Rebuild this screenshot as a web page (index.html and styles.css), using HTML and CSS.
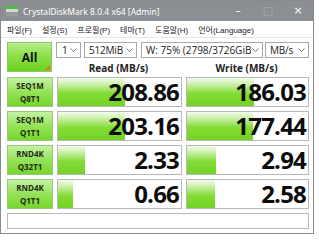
FILE: index.html
```html
<!DOCTYPE html>
<html lang="ko">

<head>
    <meta charset="UTF-8">
    <title>CrystalDiskMark</title>
    <link rel="stylesheet" href="styles.css">
</head>

<body>
    <div class="window">
        <div class="titlebar">
            <svg class="appicon" width="12" height="10" viewBox="0 0 12 10">
                <rect x="0" y="0" width="12" height="10" fill="#d8d8d8"/>
                <rect x="0" y="0" width="12" height="3" fill="#4fbf3a"/>
                <rect x="0" y="6" width="12" height="4" fill="#9a9a9a"/>
            </svg>
            <span class="title">CrystalDiskMark 8.0.4 x64 [Admin]</span>
            <div class="controls">
                <span class="ctl">&#8211;</span>
                <span class="ctl max">&#9633;</span>
                <span class="ctl">&#215;</span>
            </div>
        </div>
        <div class="menubar">
            <span>파일(F)</span>
            <span>설정(S)</span>
            <span>프로필(P)</span>
            <span>테마(T)</span>
            <span>도움말(H)</span>
            <span>언어(Language)</span>
        </div>

        <div class="main">
            <div class="top">
                <div class="all">All</div>
                <div class="topright">
                    <div class="selects">
                        <div class="select s-count"><span class="val">1</span><svg class="chev" width="7" height="4"><polyline points="0.5,0.5 3.5,3.5 6.5,0.5" fill="none" stroke="#777" stroke-width="1"/></svg></div>
                        <div class="select s-size"><span class="val">512MiB</span><svg class="chev" width="7" height="4"><polyline points="0.5,0.5 3.5,3.5 6.5,0.5" fill="none" stroke="#777" stroke-width="1"/></svg></div>
                        <div class="select s-drive"><span class="val">W: 75% (2798/3726GiB)</span><svg class="chev" width="7" height="4"><polyline points="0.5,0.5 3.5,3.5 6.5,0.5" fill="none" stroke="#777" stroke-width="1"/></svg></div>
                        <div class="select s-unit"><span class="val">MB/s</span><svg class="chev" width="7" height="4"><polyline points="0.5,0.5 3.5,3.5 6.5,0.5" fill="none" stroke="#777" stroke-width="1"/></svg></div>
                    </div>
                    <div class="heads">
                        <div class="head">Read (MB/s)</div>
                        <div class="head">Write (MB/s)</div>
                    </div>
                </div>
            </div>

            <div class="results">
                <div class="label">SEQ1M<br>Q8T1</div>
                <div class="cell"><div class="bar" style="width: 67px"></div><span class="num">208.86</span></div>
                <div class="cell"><div class="bar" style="width: 67px"></div><span class="num">186.03</span></div>

                <div class="label">SEQ1M<br>Q1T1</div>
                <div class="cell"><div class="bar" style="width: 67px"></div><span class="num">203.16</span></div>
                <div class="cell"><div class="bar" style="width: 66px"></div><span class="num">177.44</span></div>

                <div class="label">RND4K<br>Q32T1</div>
                <div class="cell"><div class="bar" style="width: 27px"></div><span class="num">2.33</span></div>
                <div class="cell"><div class="bar" style="width: 29px"></div><span class="num">2.94</span></div>

                <div class="label">RND4K<br>Q1T1</div>
                <div class="cell"><div class="bar" style="width: 15px"></div><span class="num">0.66</span></div>
                <div class="cell"><div class="bar" style="width: 28px"></div><span class="num">2.58</span></div>
            </div>

            <div class="comment"></div>
        </div>
    </div>
</body>

</html>
```

FILE: styles.css
```css
body {
    margin: 0;
    background: #ffffff;
    font-family: "Open Sans", "Noto Sans CJK KR", sans-serif;
    color: #111;
}

.window {
    width: 312px;
    border: 1px solid #8a8a8a;
    background: #ffffff;
}

/* title bar */
.titlebar {
    height: 20px;
    display: flex;
    align-items: center;
    background: #8b8f93;
    color: #ffffff;
}

.appicon {
    margin-left: 5px;
    margin-right: 5px;
}

.title {
    font-family: "Noto Sans", sans-serif;
    font-size: 8.5px;
    white-space: nowrap;
}

.controls {
    margin-left: auto;
    display: flex;
}

.ctl {
    width: 30px;
    text-align: center;
    font-family: "DejaVu Sans", sans-serif;
    font-size: 11px;
    line-height: 20px;
}

.ctl.max {
    color: #a9adb1;
}

/* menu */
.menubar {
    height: 16px;
    display: flex;
    align-items: center;
    padding-left: 6px;
    gap: 10px;
    font-family: "Liberation Sans", "Noto Sans CJK KR", sans-serif;
    font-size: 8px;
    color: #222;
    border-bottom: 1px solid #e6e6e6;
}

/* main area */
.main {
    padding: 4px 4px 4px 6px;
}

.top {
    display: flex;
    gap: 4px;
    height: 30px;
    margin-bottom: 5px;
}

.all {
    width: 44px;
    height: 28px;
    border: 1px solid #8cc46a;
    background: linear-gradient(to bottom, #b6ee8c 0%, #8ee04a 45%, #6cd21c 100%);
    font-weight: 700;
    font-size: 12px;
    line-height: 30px;
    text-align: center;
    position: relative;
}

.all::after {
    content: "";
    position: absolute;
    right: 1px;
    bottom: 1px;
    border-left: 5px solid transparent;
    border-bottom: 5px solid #e8742a;
}

.topright {
    width: 253px;
}

.selects {
    display: flex;
    height: 16px;
}

.select {
    box-sizing: border-box;
    height: 16px;
    border: 1px solid #a8a8a8;
    background: #fff;
    display: flex;
    align-items: center;
    overflow: hidden;
    font-size: 10px;
    letter-spacing: -0.2px;
    color: #222;
}

.select .val {
    padding-left: 4px;
    white-space: nowrap;
    overflow: hidden;
    flex: 1;
}

.select .chev {
    flex: none;
    margin: 0 3px 0 1px;
}

.s-count { width: 25px; margin-right: 3px; }
.s-count .val { padding-left: 5px; }
.s-size { width: 53px; margin-right: 4px; }
.s-drive { width: 122px; margin-right: 2px; letter-spacing: 0; }
.s-unit { width: 44px; }

.heads {
    display: flex;
    gap: 4px;
    padding-top: 3px;
}

.head {
    font-weight: 700;
    font-size: 10px;
    line-height: 14px;
    text-align: center;
    color: #222;
}

.head:first-child { width: 125px; }
.head:last-child { width: 123px; }

/* results grid */
.results {
    display: grid;
    grid-template-columns: 46px 125px 123px;
    grid-auto-rows: 30px;
    column-gap: 4px;
    row-gap: 4px;
}

.label {
    border: 1px solid #98c880;
    background: linear-gradient(to bottom, #c4f2a2 0%, #96e25a 50%, #76d62a 100%);
    font-weight: 700;
    font-size: 8px;
    line-height: 13px;
    padding-top: 1px;
    text-align: center;
    color: #1c2a14;
}

.cell {
    border: 1px solid #b8b8b8;
    background: #fff;
    display: grid;
}

.bar,
.num {
    grid-area: 1 / 1;
}

.bar {
    height: 28px;
    background: linear-gradient(to bottom, #f4fcee 0%, #bcec92 30%, #84dc36 55%, #72d224 100%);
}

.num {
    justify-self: end;
    align-self: center;
    padding-right: 2px;
    font-weight: 700;
    font-size: 24px;
    letter-spacing: -0.8px;
    line-height: 28px;
    color: #0c0c0c;
}

.comment {
    margin-top: 4px;
    height: 14px;
    border: 1px solid #b8b8b8;
    width: 300px;
}
```
